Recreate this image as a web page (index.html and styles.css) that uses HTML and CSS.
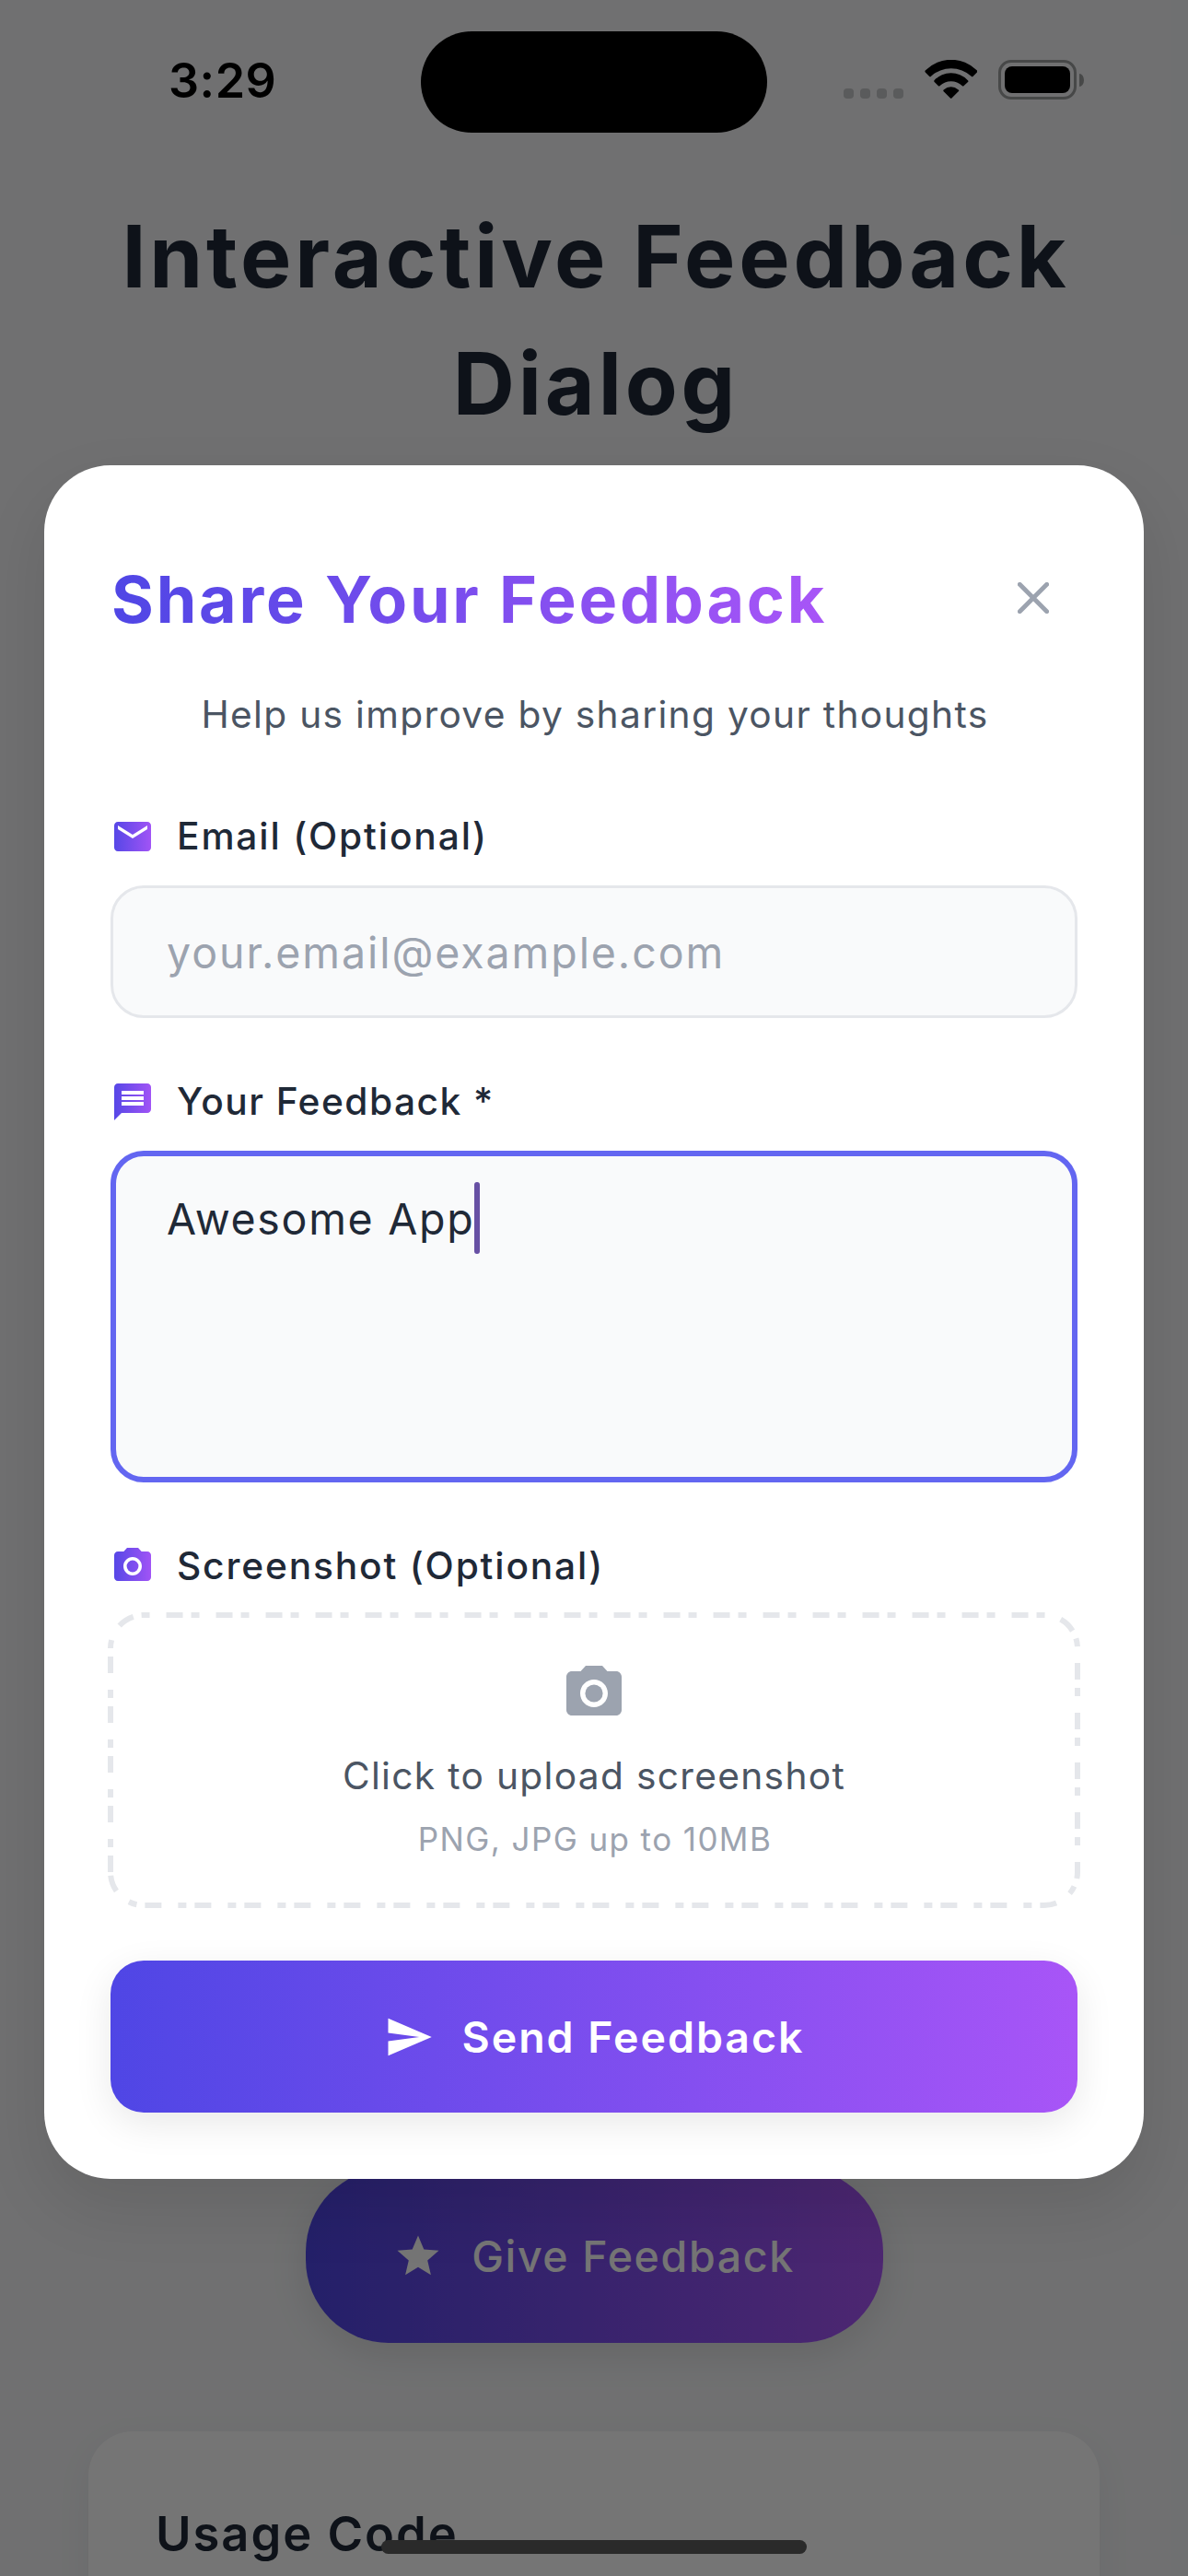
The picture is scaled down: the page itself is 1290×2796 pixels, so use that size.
FILE: index.html
```html
<!DOCTYPE html>
<html lang="en">
<head>
<meta charset="utf-8">
<title>Interactive Feedback Dialog</title>
<link rel="stylesheet" href="styles.css">
</head>
<body>
<div class="screen">
  <main class="page">
    <h1 class="page-title">Interactive Feedback Dialog</h1>
    <button class="give-button" type="button">
      <svg class="button-icon" viewBox="0 0 24 24" fill="currentColor"><path d="M12 17.27 18.18 21l-1.64-7.03L22 9.24l-7.19-.61L12 2 9.19 8.63 2 9.24l5.46 4.73L5.82 21z"/></svg>
      <span>Give Feedback</span>
    </button>
    <section class="usage-card">
      <h2 class="usage-title">Usage Code</h2>
    </section>
  </main>

  <div class="scrim">
    <section class="dialog" role="dialog" aria-label="Share Your Feedback">
      <header class="dialog-header">
        <h2 class="dialog-title">Share Your Feedback</h2>
        <button class="close-button" type="button" aria-label="Close">
          <svg class="close-icon" viewBox="0 0 34 34"><path d="M2.3 2.3 31.7 31.7M31.7 2.3 2.3 31.7" fill="none" stroke="currentColor" stroke-width="4.8" stroke-linecap="round"/></svg>
        </button>
      </header>
      <p class="dialog-subtitle">Help us improve by sharing your thoughts</p>

      <svg class="defs" width="0" height="0">
        <defs>
          <linearGradient id="brand" gradientUnits="userSpaceOnUse" x1="0" y1="0" x2="24" y2="0">
            <stop offset="0" stop-color="#4f46e5"/>
            <stop offset="1" stop-color="#a855f7"/>
          </linearGradient>
        </defs>
      </svg>

      <div class="field">
        <div class="field-label">
          <svg class="label-icon" viewBox="0 0 24 24" fill="url(#brand)"><path d="M20 4H4c-1.100 0-1.990.9-1.990 2L2 18c0 1.100.9 2 2 2h16c1.100 0 2-.9 2-2V6c0-1.100-.9-2-2-2zm0 4-8 5-8-5V6l8 5 8-5v2z"/></svg>
          <span class="email-label">Email (Optional)</span>
        </div>
        <input class="email-input" type="text" placeholder="your.email@example.com">
      </div>

      <div class="field">
        <div class="field-label">
          <svg class="label-icon" viewBox="0 0 24 24" fill="url(#brand)"><path d="M20 2H4c-1.100 0-1.990.9-1.990 2L2 22l4-4h14c1.100 0 2-.9 2-2V4c0-1.100-.9-2-2-2zm-2 12H6v-2h12v2zm0-3H6V9h12v2zm0-3H6V6h12v2z"/></svg>
          <span class="feedback-label">Your Feedback *</span>
        </div>
        <div class="feedback-input">
          <span class="feedback-text">Awesome App</span><span class="caret"></span>
        </div>
      </div>

      <div class="field upload-field">
        <div class="field-label">
          <svg class="label-icon" viewBox="0 0 24 24" fill="url(#brand)"><circle cx="12" cy="12" r="3.2"/><path d="M9 2 7.170 4H4c-1.100 0-2 .9-2 2v12c0 1.100.9 2 2 2h16c1.100 0 2-.9 2-2V6c0-1.100-.9-2-2-2h-3.170L15 2H9zm3 15c-2.760 0-5-2.240-5-5s2.240-5 5-5 5 2.240 5 5-2.240 5-5 5z"/></svg>
          <span class="shot-label">Screenshot (Optional)</span>
        </div>
        <div class="upload">
          <svg class="upload-outline" viewBox="0 0 1050 315"><path d="M0 279V36A36 36 0 0 1 36 0H1014A36 36 0 0 1 1050 36V279A36 36 0 0 1 1014 315H36A36 36 0 0 1 0 279Z" fill="none" stroke="#e5e7eb" stroke-width="6" stroke-dasharray="18 9 9 18"/></svg>
          <svg class="upload-icon" viewBox="0 0 24 24" fill="currentColor"><circle cx="12" cy="12" r="3.2"/><path d="M9 2 7.170 4H4c-1.100 0-2 .9-2 2v12c0 1.100.9 2 2 2h16c1.100 0 2-.9 2-2V6c0-1.100-.9-2-2-2h-3.170L15 2H9zm3 15c-2.760 0-5-2.240-5-5s2.240-5 5-5 5 2.240 5 5-2.240 5-5 5z"/></svg>
          <p class="upload-text">Click to upload screenshot</p>
          <p class="upload-hint">PNG, JPG up to 10MB</p>
        </div>
      </div>

      <button class="send-button" type="button">
        <svg class="button-icon" viewBox="0 0 24 24" fill="currentColor"><path d="M2.010 21 23 12 2.010 3 2 10l15 2-15 2z"/></svg>
        <span>Send Feedback</span>
      </button>
    </section>
  </div>

  <div class="status-bar">
    <span class="time">3:29</span>
    <span class="island"></span>
    <div class="status-icons">
      <div class="signal"><i></i><i></i><i></i><i></i></div>
      <svg class="wifi" viewBox="371 75 173 126"><path d="M374 116Q370 112 374 109A118 118 0 0 1 541 109Q545 112 541 116L529 128Q526 131 523 128A98 98 0 0 0 392 128Q389 131 386 128ZM403 147Q400 144 403 141A75 75 0 0 1 511 141Q515 144 512 147L499 159Q496 162 493 159A53 53 0 0 0 421 159Q418 162 415 159ZM433 178Q430 175 434 172A34 34 0 0 1 480 172Q485 175 481 178L460 199Q457 202 454 199Z"/></svg>
      <div class="battery"><span class="battery-body"><span class="battery-level"></span></span><span class="battery-cap"></span></div>
    </div>
  </div>
  <div class="home-indicator"></div>
</div>
</body>
</html>
```
FILE: styles.css
```css
* { box-sizing: border-box; }

body {
  margin: 0;
  font-family: Inter, "Liberation Sans", sans-serif;
  color: #1f2937;
}

h1, h2, p { margin: 0; }

button {
  border: 0;
  padding: 0;
  font: inherit;
  background: none;
}

svg { display: block; flex: none; }

.screen {
  position: relative;
  width: 1290px;
  height: 2796px;
  overflow: hidden;
  background: #f3f4f6;
}

/* Page behind the dialog */
.page {
  display: flex;
  flex-direction: column;
  align-items: center;
  padding: 209px 96px 0;
}

.page-title {
  height: 276px;
  margin-bottom: 1869px;
  padding-left: 4px;
  font-size: 93px;
  font-weight: 700;
  line-height: 138px;
  letter-spacing: 3.85px;
  text-align: center;
}

.give-button {
  display: flex;
  align-items: center;
  justify-content: center;
  gap: 31px;
  width: 627px;
  height: 189px;
  border-radius: 90px;
  background: linear-gradient(90deg, #4f46e5, #a855f7);
  box-shadow: 0 12px 42px rgba(0, 0, 0, 0.1);
  color: #fff;
  font-size: 46.5px;
  font-weight: 500;
  letter-spacing: 1.62px;
}

.button-icon { width: 54px; height: 54px; }

.usage-card {
  width: 1098px;
  height: 600px;
  margin-top: 96px;
  padding: 72px 73px;
  border-radius: 48px;
  background: #fff;
  box-shadow: 0 12px 42px rgba(0, 0, 0, 0.05);
}

.usage-title {
  font-size: 52.5px;
  font-weight: 600;
  line-height: 78px;
  letter-spacing: 1.95px;
}

/* Dialog */
.scrim {
  position: absolute;
  inset: 0;
  padding: 505px 48px 0;
  background: rgba(0, 0, 0, 0.54);
}

.dialog {
  height: 1860px;
  padding: 72px;
  border-radius: 72px;
  background: #fff;
  box-shadow: 0 30px 70px rgba(0, 0, 0, 0.1);
}

.dialog-header {
  display: flex;
  align-items: center;
  justify-content: space-between;
  height: 144px;
}

.dialog-title {
  padding: 4px 0 0 1px;
  background: linear-gradient(90deg, #4f46e5, #a855f7);
  -webkit-background-clip: text;
  background-clip: text;
  color: transparent;
  font-size: 70px;
  font-weight: 700;
  line-height: 100px;
  letter-spacing: 2.8px;
}

.close-button {
  display: flex;
  align-items: center;
  justify-content: center;
  width: 96px;
  height: 96px;
  color: #9ca3af;
}

.close-icon { width: 34px; height: 34px; }

.dialog-subtitle {
  margin: 25px 0 78px;
  padding-left: 2px;
  color: #4b5563;
  font-size: 40.7px;
  line-height: 60px;
  letter-spacing: 1.31px;
  text-align: center;
}

.defs { position: absolute; }

.field { margin-bottom: 67px; }

.field-label {
  display: flex;
  gap: 24px;
  height: 48px;
  margin-bottom: 29px;
  font-size: 40.7px;
  font-weight: 500;
  line-height: 48px;
}

.label-icon { width: 48px; height: 48px; }

.email-label { letter-spacing: 1.85px; }
.feedback-label { letter-spacing: 1.45px; }
.shot-label { letter-spacing: 1.83px; }

.email-input {
  display: block;
  width: 100%;
  height: 144px;
  padding: 2px 58px 0;
  border: 3px solid #e5e7eb;
  border-radius: 36px;
  background: #f9fafb;
  font: 400 46.5px Inter, "Liberation Sans", sans-serif;
  letter-spacing: 1.93px;
}

.email-input::placeholder { color: #9ca3af; opacity: 1; }

.feedback-input {
  display: flex;
  align-items: flex-start;
  height: 360px;
  padding: 28px 55px;
  border: 6px solid #6366f1;
  border-radius: 36px;
  background: #f9fafb;
  font-size: 46.5px;
  line-height: 80px;
  letter-spacing: 1.7px;
}

.caret {
  width: 6px;
  height: 78px;
  border-radius: 3px;
  background: #6750a4;
}

.upload-field { margin-bottom: 60px; }

.upload {
  position: relative;
  display: flex;
  flex-direction: column;
  align-items: center;
  height: 315px;
  padding-top: 48.5px;
}

.upload-outline {
  position: absolute;
  inset: 0;
  width: 1050px;
  height: 315px;
  overflow: visible;
}

.upload-icon {
  width: 72px;
  height: 72px;
  margin-bottom: 24.5px;
  color: #9ca3af;
}

.upload-text {
  margin-bottom: 13px;
  color: #4b5563;
  font-size: 40.7px;
  line-height: 60px;
  letter-spacing: 1.31px;
}

.upload-hint {
  padding-left: 2px;
  color: #9ca3af;
  font-size: 35px;
  line-height: 50px;
  letter-spacing: 1.4px;
}

.send-button {
  display: flex;
  align-items: center;
  justify-content: center;
  gap: 31px;
  width: 100%;
  height: 165px;
  border-radius: 36px;
  background: linear-gradient(90deg, #4f46e5, #a855f7);
  box-shadow: 0 12px 42px rgba(0, 0, 0, 0.09);
  color: #fff;
  font-size: 46.5px;
  font-weight: 560;
  letter-spacing: 1.95px;
}

/* System overlays */
.status-bar {
  position: absolute;
  top: 0;
  left: 0;
  right: 0;
  display: grid;
  grid-template-columns: 457px 376px 1fr;
  height: 162px;
  color: #000;
}

.time {
  padding: 58px 0 0 183px;
  font-size: 52px;
  font-weight: 600;
  line-height: 60px;
  letter-spacing: 0.5px;
}

.island {
  height: 110.5px;
  margin-top: 33.5px;
  border-radius: 56px;
  background: #000;
}

.status-icons {
  display: flex;
  align-items: flex-end;
  height: 108px;
  padding-left: 83px;
}

.signal {
  display: flex;
  gap: 7px;
  margin: 0 22.7px 1px 0;
}

.signal i {
  width: 11px;
  height: 11px;
  border-radius: 4px;
  background: #5a5b5c;
}

.wifi {
  width: 57.7px;
  height: 42px;
  margin: 0 22.6px 1px 0;
}

.battery {
  display: flex;
  align-items: center;
  gap: 3px;
}

.battery-body {
  display: block;
  width: 85px;
  height: 43px;
  padding: 4px;
  border: 3px solid #474848;
  border-radius: 14px;
}

.battery-level {
  display: block;
  height: 29px;
  border-radius: 8px;
  background: #000;
}

.battery-cap {
  width: 5px;
  height: 14px;
  border-radius: 0 5px 5px 0 / 0 7px 7px 0;
  background: #474848;
}

.home-indicator {
  position: absolute;
  left: 414px;
  bottom: 24px;
  width: 462px;
  height: 15px;
  border-radius: 8px;
  background: #2a2a2a;
}
```
